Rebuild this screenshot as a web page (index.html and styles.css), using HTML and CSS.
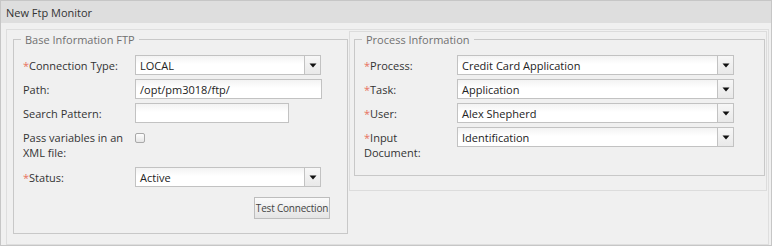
FILE: index.html
```html
<!DOCTYPE html>
<html>
<head>
<meta charset="utf-8">
<link rel="stylesheet" href="styles.css">
</head>
<body>
<div class="panel">
  <div class="titlebar">New Ftp Monitor</div>
  <div class="panel-body">
    <div class="columns">
      <div class="col col-left">
        <fieldset class="group group-left">
          <legend>Base Information FTP</legend>
          <div class="row">
            <div class="label"><span class="req">*</span>Connection Type:</div>
            <div class="select w186"><span class="val">LOCAL</span><span class="arrow"><svg width="8" height="5" viewBox="0 0 8 5"><polygon points="0.5,0.5 7.5,0.5 4,4.5" fill="#111"/></svg></span></div>
          </div>
          <div class="row">
            <div class="label">Path:</div>
            <div class="input w187">/opt/pm3018/ftp/</div>
          </div>
          <div class="row">
            <div class="label">Search Pattern:</div>
            <div class="input w154"></div>
          </div>
          <div class="row">
            <div class="label two">Pass variables in an<br>XML file:</div>
            <div class="checkbox"></div>
          </div>
          <div class="row">
            <div class="label"><span class="req">*</span>Status:</div>
            <div class="select w186"><span class="val">Active</span><span class="arrow"><svg width="8" height="5" viewBox="0 0 8 5"><polygon points="0.5,0.5 7.5,0.5 4,4.5" fill="#111"/></svg></span></div>
          </div>
          <div class="actions">
            <button class="btn">Test Connection</button>
          </div>
        </fieldset>
      </div>
      <div class="col col-right">
        <fieldset class="group group-right">
          <legend>Process Information</legend>
          <div class="row">
            <div class="label lw93"><span class="req">*</span>Process:</div>
            <div class="select w277"><span class="val">Credit Card Application</span><span class="arrow"><svg width="8" height="5" viewBox="0 0 8 5"><polygon points="0.5,0.5 7.5,0.5 4,4.5" fill="#111"/></svg></span></div>
          </div>
          <div class="row">
            <div class="label lw93"><span class="req">*</span>Task:</div>
            <div class="select w277"><span class="val">Application</span><span class="arrow"><svg width="8" height="5" viewBox="0 0 8 5"><polygon points="0.5,0.5 7.5,0.5 4,4.5" fill="#111"/></svg></span></div>
          </div>
          <div class="row">
            <div class="label lw93"><span class="req">*</span>User:</div>
            <div class="select w277"><span class="val">Alex Shepherd</span><span class="arrow"><svg width="8" height="5" viewBox="0 0 8 5"><polygon points="0.5,0.5 7.5,0.5 4,4.5" fill="#111"/></svg></span></div>
          </div>
          <div class="row">
            <div class="label lw93 two"><span class="req">*</span>Input<br>Document:</div>
            <div class="select w277"><span class="val">Identification</span><span class="arrow"><svg width="8" height="5" viewBox="0 0 8 5"><polygon points="0.5,0.5 7.5,0.5 4,4.5" fill="#111"/></svg></span></div>
          </div>
        </fieldset>
      </div>
    </div>
  </div>
</div>
</body>
</html>
```
FILE: styles.css
```css
* { box-sizing: border-box; }
html, body { margin: 0; padding: 0; }
body {
  font-family: "Open Sans", "DejaVu Sans", sans-serif;
  font-size: 11px;
  color: #333;
  background: #fff;
}
.panel {
  width: 772px;
  height: 246px;
  border: 1px solid #c6c6c6;
  background: #f0f0f0;
  overflow: hidden;
}
.titlebar {
  height: 22px;
  line-height: 23px;
  padding-left: 5px;
  background: #dedede;
  color: #333;
  font-size: 11px;
}
.panel-body {
  padding: 6px 0 0 5px;
}
.columns {
  display: flex;
  align-items: flex-start;
  width: 763px;
  height: 216px;
  border: 1px solid #dedede;
  padding: 1px;
}
.col-left {
  width: 341px;
  padding: 1px 0 0 5px;
}
.col-right {
  width: 418px;
  border: 1px solid #dcdcdc;
  padding: 0 1px 14px 4px;
}
.group {
  margin: 0;
  border: 1px solid #c8c8c8;
  padding: 8px 9px 0 9px;
}
.group-left { width: 335px; padding-bottom: 14px; }
.group-right { width: 411px; padding-bottom: 8px; }
legend {
  margin-left: -2px;
  padding: 0 4px;
  line-height: 15px;
  color: #707070;
  font-size: 11px;
}
.row {
  display: flex;
  align-items: flex-start;
  margin-bottom: 4px;
}
.label {
  width: 112px;
  padding-top: 3px;
  line-height: 15px;
  color: #333;
  flex: none;
  white-space: nowrap;
}
.label.two { padding-bottom: 3px; }
.lw93 { width: 93px; }
.req { color: #e8705f; }
.select, .input {
  height: 20px;
  border: 1px solid #c2c2c2;
  background: linear-gradient(#f3f3f3, #ffffff 45%);
  display: flex;
  align-items: center;
  color: #222;
  padding-left: 4px;
  flex: none;
}
.select .val { flex: 1; }
.select .arrow {
  width: 16px;
  height: 18px;
  border-left: 1px solid #c2c2c2;
  background: linear-gradient(#f7f7f7, #e9e9e9);
  display: flex;
  align-items: center;
  justify-content: center;
}
.w186 { width: 186px; }
.w187 { width: 187px; }
.w154 { width: 154px; }
.w277 { width: 277px; }
.checkbox {
  width: 10px;
  height: 10px;
  margin-top: 6px;
  border: 1px solid #a9a9a9;
  border-radius: 2px;
  background: linear-gradient(#fdfdfd, #e6e6e6);
}
.actions {
  display: flex;
  justify-content: flex-end;
  padding: 6px 8px 0 0;
}
.btn {
  width: 76px;
  height: 22px;
  padding: 0;
  white-space: nowrap;
  font-family: "Open Sans", "DejaVu Sans", sans-serif;
  font-size: 10px;
  letter-spacing: -0.2px;
  color: #444;
  border: 1px solid #bdbdbd;
  background: linear-gradient(#fafafa, #e4e4e4);
}
```
